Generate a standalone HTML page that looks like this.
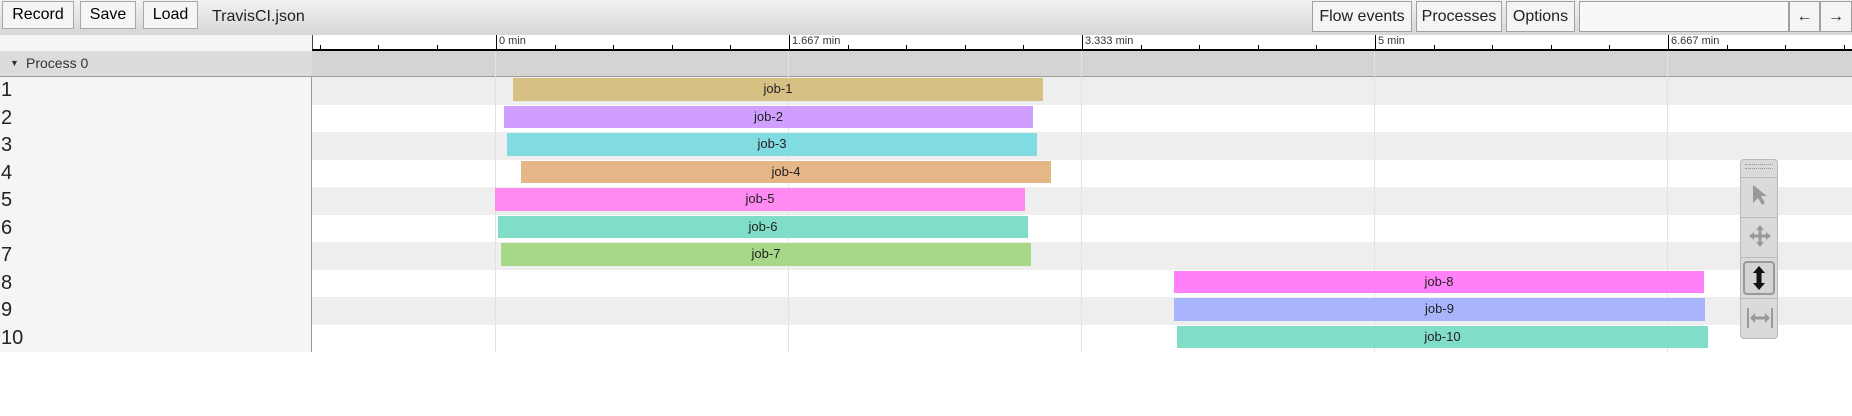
<!DOCTYPE html>
<html><head><meta charset="utf-8"><style>
*{margin:0;padding:0;box-sizing:border-box}
body{width:1852px;height:416px;background:#fff;font-family:"Liberation Sans",sans-serif;position:relative;overflow:hidden}
.tb{position:absolute;left:0;top:0;width:1852px;height:35px;background:linear-gradient(#f2f2f2,#d6d6d6);}
.btn{position:absolute;top:1px;height:28px;border:1px solid #a8a8a8;background:#f5f5f5;font-size:16px;line-height:26px;text-align:center;color:#000}
.btn2{position:absolute;top:1px;height:31px;border:1px solid #a0a0a0;background:#f4f4f4;font-size:16px;line-height:29px;text-align:center;color:#222}
.title{position:absolute;left:212px;top:8px;font-size:16px;color:#222}
.ruler{position:absolute;left:312px;top:35px;width:1540px;height:16px;background:#fff;border-bottom:2px solid #000;border-left:1px solid #444}
.tick{position:absolute;bottom:0;width:1px;height:4px;background:#000}
.maj{position:absolute;top:0;width:1px;height:16px;background:#000}
.lbl{position:absolute;top:0;font-size:11px;color:#333}
.lp{position:absolute;left:0;top:35px;width:312px;height:16px;background:#f4f5f6}
.ph{position:absolute;left:0;top:51px;width:1852px;height:26px;background:#dcdcdc;border-bottom:1px solid #999;font-size:14px;color:#333;line-height:25px}
.ph .r{position:absolute;left:312px;top:0;width:1540px;height:25px;background:#d4d4d4}
.left{position:absolute;left:0;top:77px;width:312px;height:275px;background:#f4f5f6;border-right:1px solid #999}
.num{position:absolute;left:1px;font-size:20px;color:#222;height:27.5px;line-height:27px}
.row{position:absolute;left:312px;width:1540px;height:27.5px}
.grid{position:absolute;top:51px;width:1px;height:301px;background:#e2e2e2}
.bar{position:absolute;height:22.5px;font-size:13px;color:#222;text-align:center;line-height:22px}
.tools{position:absolute;left:1740px;top:159px;width:38px;height:180px;background:#dadada;border:1px solid #b8b8b8;border-radius:4px}
</style></head><body>
<div class="tb">
<div class="btn" style="left:2px;width:72px">Record</div>
<div class="btn" style="left:80px;width:56px">Save</div>
<div class="btn" style="left:143px;width:55px">Load</div>
<div class="title">TravisCI.json</div>
<div class="btn2" style="left:1312px;width:100px">Flow events</div>
<div class="btn2" style="left:1416px;width:86px">Processes</div>
<div class="btn2" style="left:1506px;width:69px">Options</div>
<div class="btn2" style="left:1579px;width:210px;background:#f8f8f8"></div>
<div class="btn2" style="left:1789px;width:31px">←</div>
<div class="btn2" style="left:1820px;width:32px">→</div>
</div>
<div class="lp"></div>
<div class="ruler">
<div class="tick" style="left:7px"></div><div class="tick" style="left:65px"></div><div class="tick" style="left:124px"></div>
<div class="maj" style="left:183px"></div><div class="lbl" style="left:186px">0 min</div>
<div class="tick" style="left:242px"></div><div class="tick" style="left:300px"></div><div class="tick" style="left:359px"></div><div class="tick" style="left:417px"></div>
<div class="maj" style="left:476px"></div><div class="lbl" style="left:479px">1.667 min</div>
<div class="tick" style="left:535px"></div><div class="tick" style="left:593px"></div><div class="tick" style="left:652px"></div><div class="tick" style="left:710px"></div>
<div class="maj" style="left:769px"></div><div class="lbl" style="left:772px">3.333 min</div>
<div class="tick" style="left:828px"></div><div class="tick" style="left:886px"></div><div class="tick" style="left:945px"></div><div class="tick" style="left:1003px"></div>
<div class="maj" style="left:1062px"></div><div class="lbl" style="left:1065px">5 min</div>
<div class="tick" style="left:1121px"></div><div class="tick" style="left:1179px"></div><div class="tick" style="left:1238px"></div><div class="tick" style="left:1296px"></div>
<div class="maj" style="left:1355px"></div><div class="lbl" style="left:1358px">6.667 min</div>
<div class="tick" style="left:1414px"></div><div class="tick" style="left:1472px"></div><div class="tick" style="left:1531px"></div>
</div>
<div class="ph"><div class="r"></div><span style="position:absolute;left:10px;font-size:9px">▼</span><span style="position:absolute;left:26px">Process 0</span></div>
<div class="left">
<div class="num" style="top:0">1</div><div class="num" style="top:27.5px">2</div><div class="num" style="top:55px">3</div><div class="num" style="top:82.5px">4</div><div class="num" style="top:110px">5</div><div class="num" style="top:137.5px">6</div><div class="num" style="top:165px">7</div><div class="num" style="top:192.5px">8</div><div class="num" style="top:220px">9</div><div class="num" style="top:247.5px">10</div>
</div>
<div class="row" style="top:77px;background:#eee"></div>
<div class="row" style="top:132px;background:#eee"></div>
<div class="row" style="top:187px;background:#eee"></div>
<div class="row" style="top:242px;background:#eee"></div>
<div class="row" style="top:297px;background:#eee"></div>
<div class="grid" style="left:495px"></div><div class="grid" style="left:788px"></div><div class="grid" style="left:1081px"></div><div class="grid" style="left:1374px"></div><div class="grid" style="left:1667px"></div>
<div class="bar" style="left:513px;width:530px;top:78px;background:#d7c083">job-1</div>
<div class="bar" style="left:504px;width:529px;top:105.5px;background:#cf9eff">job-2</div>
<div class="bar" style="left:507px;width:530px;top:133px;background:#80dce0">job-3</div>
<div class="bar" style="left:521px;width:530px;top:160.5px;background:#e5b686">job-4</div>
<div class="bar" style="left:495px;width:530px;top:188px;background:#ff8af2">job-5</div>
<div class="bar" style="left:498px;width:530px;top:215.5px;background:#80dec8">job-6</div>
<div class="bar" style="left:501px;width:530px;top:243px;background:#a7d887">job-7</div>
<div class="bar" style="left:1174px;width:530px;top:270.5px;background:#ff80f9">job-8</div>
<div class="bar" style="left:1174px;width:531px;top:298px;background:#a8b5fd">job-9</div>
<div class="bar" style="left:1177px;width:531px;top:325.5px;background:#80dec8">job-10</div>
<div class="tools">
<div style="position:absolute;left:4px;top:4px;width:28px;height:5px;border-top:1px dotted #999;border-bottom:1px dotted #999"></div>
<div style="position:absolute;left:0;top:17px;width:36px;border-top:1px solid #bbb"></div>
<svg style="position:absolute;left:10px;top:24px" width="18" height="22" viewBox="0 0 18 22"><path d="M2 1 L2 19 L7 14 L11 21 L14 19 L10 12 L16 12 Z" fill="#999"/></svg>
<div style="position:absolute;left:0;top:57px;width:36px;border-top:1px solid #bbb"></div>
<svg style="position:absolute;left:7px;top:64px" width="24" height="24" viewBox="0 0 24 24"><path d="M12 1 L16 6 H13.5 V10.5 H18 V8 L23 12 L18 16 V13.5 H13.5 V18 H16 L12 23 L8 18 H10.5 V13.5 H6 V16 L1 12 L6 8 V10.5 H10.5 V6 H8 Z" fill="#999"/></svg>
<div style="position:absolute;left:0;top:97px;width:36px;border-top:1px solid #bbb"></div>
<div style="position:absolute;left:2px;top:101px;width:32px;height:34px;border:2px solid #999;border-radius:4px;background:#d4d4d4"></div>
<svg style="position:absolute;left:10px;top:105px" width="16" height="26" viewBox="0 0 16 26"><path d="M8 1 L14 8 H10.5 V18 H14 L8 25 L2 18 H5.5 V8 H2 Z" fill="#111"/></svg>
<div style="position:absolute;left:0;top:138px;width:36px;border-top:1px solid #bbb"></div>
<svg style="position:absolute;left:5px;top:146px" width="28" height="24" viewBox="0 0 28 24"><path d="M2 2 V22 M26 2 V22" stroke="#999" stroke-width="2"/><path d="M4 12 L9 7 V10.5 H19 V7 L24 12 L19 17 V13.5 H9 V17 Z" fill="#999"/></svg>
</div>
</body></html>
